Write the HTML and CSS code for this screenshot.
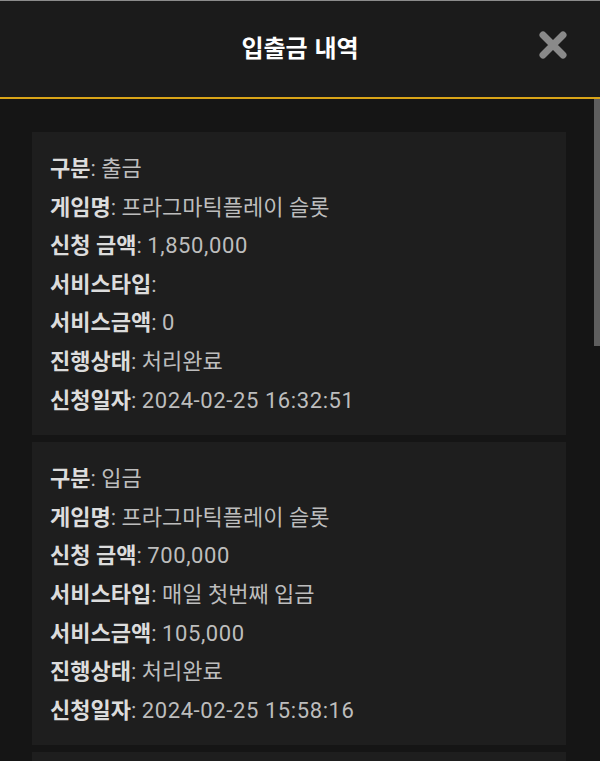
FILE: index.html
```html
<!DOCTYPE html>
<html lang="ko">
<head>
    <meta charset="UTF-8">
    <meta name="viewport" content="width=device-width, initial-scale=1.0">
    <title>입출금 내역</title>
    <link rel="stylesheet" href="styles.css">
</head>
<body>
    <div class="modal">
        <div class="modal-hdr">
            <h1 class="modal-title">입출금 내역</h1>
            <button class="close-btn" type="button" aria-label="닫기">
                <svg width="30" height="30" viewBox="0 0 30 30">
                    <path d="M5 5 L25 25 M25 5 L5 25" stroke="#8a8a8a" stroke-width="7" stroke-linecap="round" fill="none"/>
                </svg>
            </button>
        </div>
        <div class="modal-body">
            <div class="hist-card">
                <p><b>구분</b>: 출금</p>
                <p><b>게임명</b>: 프라그마틱플레이 슬롯</p>
                <p><b>신청 금액</b>: <span class="num">1,850,000</span></p>
                <p><b>서비스타입</b>: </p>
                <p><b>서비스금액</b>: <span class="num">0</span></p>
                <p><b>진행상태</b>: 처리완료</p>
                <p><b>신청일자</b>: <span class="num">2024-02-25 16:32:51</span></p>
            </div>
            <div class="hist-card">
                <p><b>구분</b>: 입금</p>
                <p><b>게임명</b>: 프라그마틱플레이 슬롯</p>
                <p><b>신청 금액</b>: <span class="num">700,000</span></p>
                <p><b>서비스타입</b>: 매일 첫번째 입금</p>
                <p><b>서비스금액</b>: <span class="num">105,000</span></p>
                <p><b>진행상태</b>: 처리완료</p>
                <p><b>신청일자</b>: <span class="num">2024-02-25 15:58:16</span></p>
            </div>
            <div class="hist-card hist-card-next"></div>
        </div>
        <div class="scroll-thumb"></div>
    </div>
</body>
</html>
```

FILE: styles.css
```css
*, *:before, *:after {
    margin: 0;
    padding: 0;
    box-sizing: border-box;
}
html, body {
    height: 100%;
    overflow: hidden;
}
body {
    background: #151515;
    font-family: Roboto, "Noto Sans CJK KR", sans-serif;
    color: #bdbdbd;
}
.modal {
    position: relative;
    height: 100%;
    border-top: 1px solid #8c8c8c;
}
.modal-hdr {
    position: relative;
    z-index: 2;
    height: 98px;
    display: flex;
    align-items: center;
    justify-content: center;
    background: #1b1b1b;
    border-bottom: 2px solid #d9a418;
}
.modal-title {
    margin-top: -5px;
    color: #fff;
    font-family: "Noto Sans CJK KR", sans-serif;
    font-size: 24px;
    font-weight: bold;
}
.close-btn {
    position: absolute;
    top: 29px;
    right: 32px;
    width: 30px;
    height: 30px;
    border: none;
    background: transparent;
    cursor: pointer;
}
.close-btn svg {
    display: block;
}
.modal-body {
    padding: 33px 34px 0 32px;
    display: flex;
    flex-direction: column;
    gap: 7px;
}
.hist-card {
    background: #1e1e1e;
    padding: 18px 18px 15px;
}
.hist-card-next {
    min-height: 120px;
}
.hist-card p {
    font-size: 22px;
    line-height: 38.6px;
    white-space: nowrap;
}
.hist-card b {
    color: #dcdcdc;
    font-weight: bold;
}
.hist-card .num {
    letter-spacing: 0.6px;
}
.scroll-thumb {
    position: absolute;
    top: 0;
    right: 0;
    z-index: 1;
    width: 6px;
    height: 345px;
    background: #5e5e5e;
}
```
